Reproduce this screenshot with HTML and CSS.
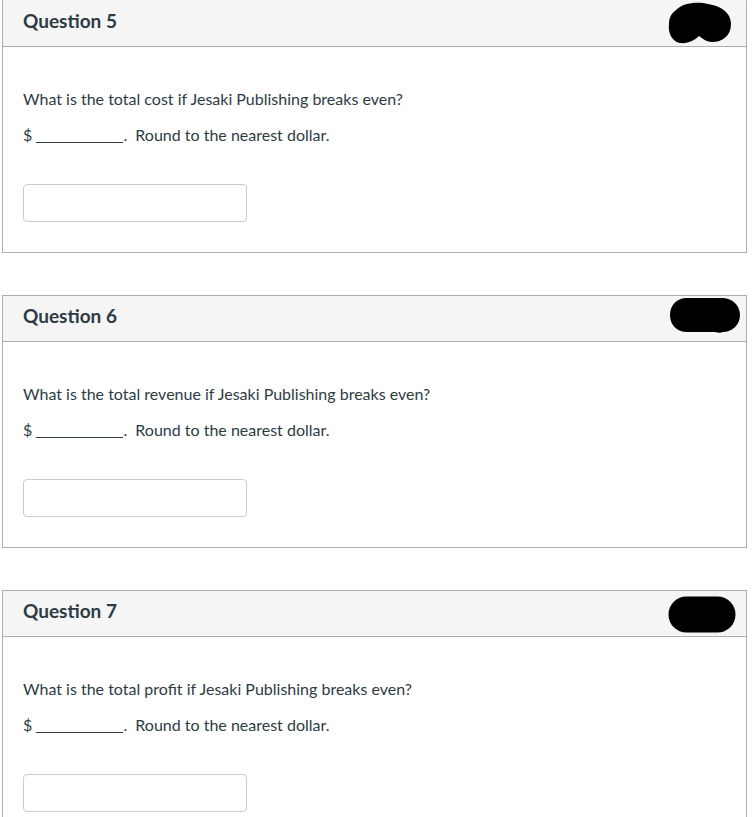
FILE: index.html
```html
<!DOCTYPE html>
<html>
<head>
<meta charset="utf-8">
<link rel="stylesheet" href="styles.css">
</head>
<body>
<div class="page">
  <div class="card">
    <div class="header">
      <span class="title">Question 5</span>
      <svg class="blob blob1" width="64" height="42" viewBox="0 0 64 42"><path d="M8 8 C14 1 30 -1 40 2 C52 4 63 10 63 22 C63 34 54 40 44 40 C38 40 34 36 31 34 C27 38 20 42 12 41 C3 39 0 30 1 22 C1 15 4 11 8 8 Z" fill="#000"/></svg>
    </div>
    <div class="content">
      <p class="q">What is the total cost if Jesaki Publishing breaks even?</p>
      <p class="q second">$ <span class="blank"></span>.&nbsp; Round to the nearest dollar.</p>
      <div class="input"></div>
    </div>
  </div>
  <div class="card">
    <div class="header">
      <span class="title">Question 6</span>
      <svg class="blob blob2" width="72" height="37" viewBox="0 0 72 37"><path d="M18 1 H53 C63 1 71 8 71 18 C71 28 63 35 54 35 C52 36 49 36 46 35 H18 C8 35 1 28 1 18 C1 8 8 1 18 1 Z" fill="#000"/></svg>
    </div>
    <div class="content">
      <p class="q">What is the total revenue if Jesaki Publishing breaks even?</p>
      <p class="q second">$ <span class="blank"></span>.&nbsp; Round to the nearest dollar.</p>
      <div class="input"></div>
    </div>
  </div>
  <div class="card">
    <div class="header">
      <span class="title">Question 7</span>
      <svg class="blob blob3" width="68" height="37" viewBox="0 0 68 37"><rect x="0.5" y="0.5" width="67" height="36" rx="18" fill="#000"/></svg>
    </div>
    <div class="content">
      <p class="q">What is the total profit if Jesaki Publishing breaks even?</p>
      <p class="q second">$ <span class="blank"></span>.&nbsp; Round to the nearest dollar.</p>
      <div class="input"></div>
    </div>
  </div>
</div>
</body>
</html>
```
FILE: styles.css
```css
html, body {
  margin: 0;
  padding: 0;
  background: #fff;
}
body {
  font-family: Lato, "Noto Sans", sans-serif;
  color: #2d3b45;
}
.page {
  padding-left: 2px;
  width: 745px;
}
.card {
  border: 1px solid #adadad;
  margin-bottom: 42px;
  background: #fff;
}
.card:first-child {
  border-top-color: #f5f5f5;
}
.header {
  height: 45px;
  background: #f5f5f5;
  border-bottom: 1px solid #adadad;
  display: flex;
  align-items: flex-start;
  justify-content: space-between;
  padding-left: 20px;
}
.title {
  font-size: 19px;
  font-weight: 700;
  line-height: 40px;
}
.blob { display: block; }
.blob1 { margin-top: 1px; margin-right: 14px; }
.blob2 { margin-top: 1px; margin-right: 5px; }
.blob3 { margin-top: 5px; margin-right: 10px; }
.content {
  padding: 40px 20px 30px;
}
.q {
  margin: 0;
  font-size: 16px;
  line-height: 24px;
}
.second {
  margin-top: 12px;
}
.blank {
  display: inline-block;
  width: 87px;
  height: 0;
  border-bottom: 1px solid #2d3b45;
  vertical-align: -2px;
}
.input {
  margin-top: 37px;
  width: 222px;
  height: 36px;
  border: 1px solid #c7cdd1;
  border-radius: 4px;
}
```
